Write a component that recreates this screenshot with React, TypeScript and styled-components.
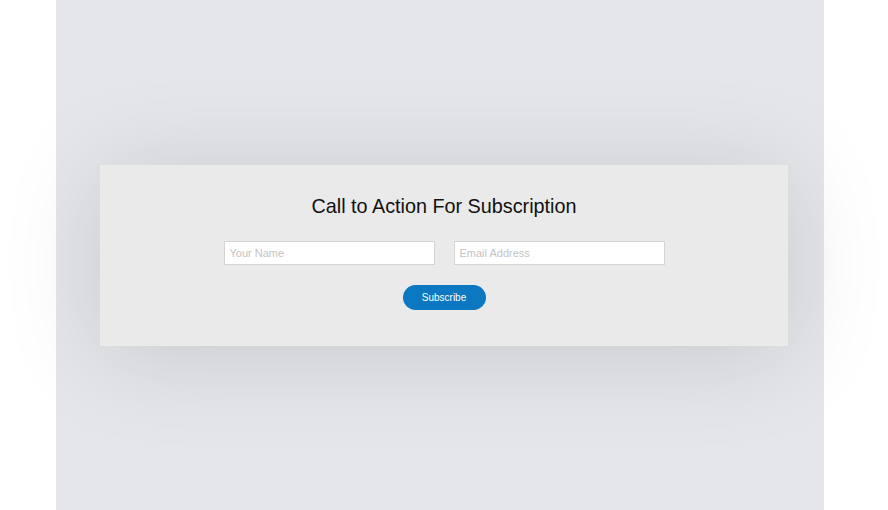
import React from "react";
import styled, { createGlobalStyle } from "styled-components";

const Global = createGlobalStyle`
  html, body { margin: 0; padding: 0; background: #ffffff; }
  body { font-family: "Liberation Sans", Arial, sans-serif; }
`;

const Page = styled.div`
  width: 888px;
  height: 510px;
  overflow: hidden;
  position: relative;
`;

const Column = styled.div`
  margin-left: 56px;
  width: 768px;
  height: 510px;
  background: #e5e6ea;
  padding-top: 165px;
  box-sizing: border-box;
`;

const Card = styled.section`
  margin-left: 44px;
  width: 688px;
  height: 181px;
  box-sizing: border-box;
  background: #eaeaea;
  box-shadow: 0 8px 100px rgba(0, 0, 0, 0.13);
  display: flex;
  flex-direction: column;
  align-items: center;
  padding-top: 29px;
`;

const Title = styled.h2`
  margin: 0;
  font-family: "Liberation Sans", Arial, sans-serif;
  font-weight: 400;
  font-size: 19.8px;
  line-height: 24px;
  color: #111111;
`;

const Row = styled.div`
  display: flex;
  gap: 19px;
  margin-top: 23px;
`;

const Input = styled.input`
  width: 211px;
  height: 24px;
  box-sizing: border-box;
  border: 1px solid #d4d4d4;
  background: #ffffff;
  padding: 0 5px;
  font-family: "Liberation Sans", Arial, sans-serif;
  font-size: 11px;
  outline: none;
  &::placeholder { color: #c4c4c4; }
`;

const Button = styled.button`
  margin-top: 20px;
  width: 83px;
  height: 25px;
  border: none;
  border-radius: 13px;
  background: #0b78c1;
  color: #ffffff;
  font-family: "Liberation Sans", Arial, sans-serif;
  font-size: 10px;
  cursor: pointer;
`;

export default function App() {
  return (
    <Page>
      <Global />
      <Column>
        <Card>
          <Title>Call to Action For Subscription</Title>
          <Row>
            <Input placeholder="Your Name" />
            <Input placeholder="Email Address" />
          </Row>
          <Button>Subscribe</Button>
        </Card>
      </Column>
    </Page>
  );
}
